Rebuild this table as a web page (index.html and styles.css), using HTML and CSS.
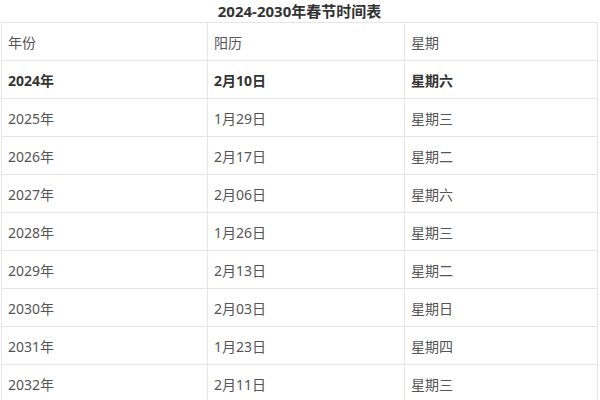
FILE: index.html
```html
<!DOCTYPE html>
<html lang="zh">
<head>
<meta charset="utf-8">
<link rel="stylesheet" href="styles.css">
</head>
<body>
<div class="wrap">
<table class="tbl">
<caption class="cap">2024-2030年春节时间表</caption>
<colgroup><col class="c1"><col class="c2"><col class="c3"></colgroup>
<tbody>
<tr><td>年份</td><td>阳历</td><td>星期</td></tr>
<tr class="strong"><td>2024年</td><td>2月10日</td><td>星期六</td></tr>
<tr><td>2025年</td><td>1月29日</td><td>星期三</td></tr>
<tr><td>2026年</td><td>2月17日</td><td>星期二</td></tr>
<tr><td>2027年</td><td>2月06日</td><td>星期六</td></tr>
<tr><td>2028年</td><td>1月26日</td><td>星期三</td></tr>
<tr><td>2029年</td><td>2月13日</td><td>星期二</td></tr>
<tr><td>2030年</td><td>2月03日</td><td>星期日</td></tr>
<tr><td>2031年</td><td>1月23日</td><td>星期四</td></tr>
<tr><td>2032年</td><td>2月11日</td><td>星期三</td></tr>
</tbody>
</table>
</div>
</body>
</html>
```

FILE: styles.css
```css
html, body {
  margin: 0;
  padding: 0;
  background: #ffffff;
}
.wrap {
  padding-left: 1px;
  width: 596px;
}
.tbl {
  width: 596px;
  border-collapse: collapse;
  table-layout: fixed;
  font-family: "Noto Sans", "Noto Sans CJK SC", sans-serif;
  font-size: 14px;
  color: #555555;
}
.c1 { width: 206px; }
.c2 { width: 197px; }
.c3 { width: 193px; }
.cap {
  height: 22px;
  line-height: 22px;
  font-weight: bold;
  font-size: 15px;
  color: #333333;
  text-align: center;
}
.tbl td {
  border: 1px solid #e6e6e6;
  height: 38px;
  padding: 0 0 0 6px;
  box-sizing: border-box;
  vertical-align: middle;
}
.strong td {
  font-weight: bold;
  color: #333333;
}
```
